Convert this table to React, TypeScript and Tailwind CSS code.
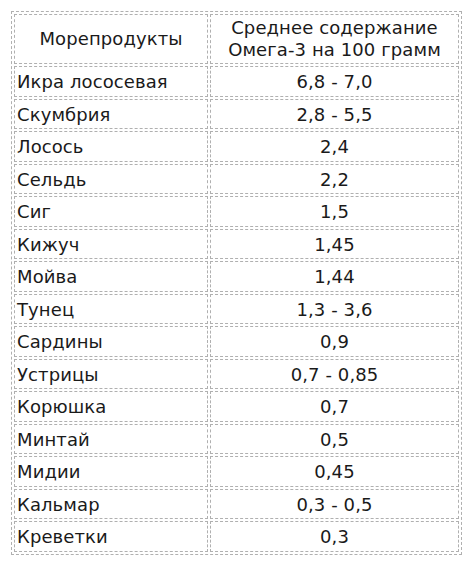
const rows: [string, string][] = [
  ['Икра лососевая', '6,8 - 7,0'],
  ['Скумбрия', '2,8 - 5,5'],
  ['Лосось', '2,4'],
  ['Сельдь', '2,2'],
  ['Сиг', '1,5'],
  ['Кижуч', '1,45'],
  ['Мойва', '1,44'],
  ['Тунец', '1,3 - 3,6'],
  ['Сардины', '0,9'],
  ['Устрицы', '0,7 - 0,85'],
  ['Корюшка', '0,7'],
  ['Минтай', '0,5'],
  ['Мидии', '0,45'],
  ['Кальмар', '0,3 - 0,5'],
  ['Креветки', '0,3'],
];

export default function App() {
  return (
    <div className="min-h-screen bg-white pt-[11px] pl-[11px] font-['DejaVu_Sans',Verdana,sans-serif] text-[18px] tracking-[0.1px] text-[#1a1a1a]">
      <table className="border-separate border-spacing-[2px] border border-dashed border-[#b0b0b0]">
        <thead>
          <tr>
            <th className="w-[194px] border border-dashed border-[#b0b0b0] px-[2px] py-[2px] text-center font-normal leading-[22px]">
              Морепродукты
            </th>
            <th className="w-[249px] border border-dashed border-[#b0b0b0] px-[2px] py-[2px] text-center font-normal leading-[22px]">
              Среднее содержание
              <br />
              Омега-3 на 100 грамм
            </th>
          </tr>
        </thead>
        <tbody>
          {rows.map(([name, value]) => (
            <tr key={name}>
              <td className="border border-dashed border-[#b0b0b0] px-[2px] pt-[4px] pb-[2px] text-left leading-[22.5px]">
                {name}
              </td>
              <td className="border border-dashed border-[#b0b0b0] px-[2px] pt-[4px] pb-[2px] text-center leading-[22.5px]">
                {value}
              </td>
            </tr>
          ))}
        </tbody>
      </table>
    </div>
  );
}
